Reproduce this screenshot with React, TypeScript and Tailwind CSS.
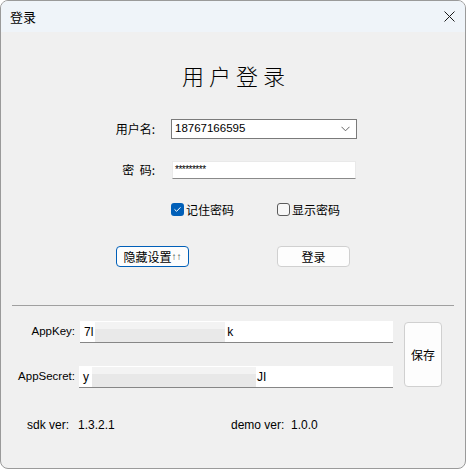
import React from 'react';

const cjk = { fontFamily: '"Noto Sans CJK SC", "Liberation Sans", sans-serif' };
const latin = { fontFamily: '"Liberation Sans", "Noto Sans CJK SC", sans-serif' };

function Checkbox({ checked, label }: { checked?: boolean; label: string }) {
  return (
    <div className="flex items-center">
      {checked ? (
        <span className="flex h-[13px] w-[13px] items-center justify-center rounded-[3px] bg-[#005fb8]">
          <svg width="9" height="9" viewBox="0 0 9 9" fill="none">
            <path d="M1.8 4.6 L3.6 6.3 L7.2 2.6" stroke="white" strokeWidth="1" strokeLinecap="round" strokeLinejoin="round" />
          </svg>
        </span>
      ) : (
        <span className="h-[13px] w-[13px] rounded-[3px] border border-[#5b5b5b] bg-[#f7f7f7]" />
      )}
      <span className="ml-[2px] text-[12px] leading-[13px] text-black" style={cjk}>
        {label}
      </span>
    </div>
  );
}

export default function App() {
  return (
    <div className="h-[469px] w-[466px] overflow-hidden rounded-[8px] border border-[#9a9a9a] bg-[#f0f0f0] text-black">
      {/* title bar */}
      <div className="flex h-[31px] items-center justify-between bg-[#eff4f9] pl-[9px] pr-[10px]">
        <span className="text-[13px]" style={cjk}>登录</span>
        <svg width="11" height="11" viewBox="0 0 11 11">
          <path d="M0.5 0.5 L10.5 10.5 M10.5 0.5 L0.5 10.5" stroke="#1a1a1a" strokeWidth="1" />
        </svg>
      </div>

      {/* heading */}
      <div className="mt-[30px] flex h-[26px] justify-center pl-[6px]">
        <span className="text-[22px] font-light leading-[26px] tracking-[5px]" style={cjk}>用户登录</span>
      </div>

      {/* username */}
      <div className="mt-[31px] flex items-center pl-[93px]">
        <span className="w-[61px] text-right text-[12px]" style={cjk}>用户名:</span>
        <div className="ml-[16px] flex h-[20px] w-[186px] items-center justify-between border border-[#7a7a7a] bg-white pl-[3px] pr-[6px]">
          <span className="text-[11.5px]" style={latin}>18767166595</span>
          <svg width="9" height="6" viewBox="0 0 9 6">
            <path d="M0.5 0.8 L4.5 4.8 L8.5 0.8" stroke="#555" strokeWidth="0.9" fill="none" />
          </svg>
        </div>
      </div>

      {/* password */}
      <div className="mt-[22px] flex items-center pl-[93px]">
        <span className="w-[61px] text-right text-[12px]" style={cjk}>密&nbsp;&nbsp;码:</span>
        <div className="ml-[17px] flex h-[18px] w-[184px] items-center border border-b-[#8a8a8a] border-l-[#e9e9e9] border-r-[#e9e9e9] border-t-[#e9e9e9] bg-white pl-[2px]">
          <span className="text-[10px] leading-[10px] tracking-[-0.5px]" style={latin}>*********</span>
        </div>
      </div>

      {/* checkboxes */}
      <div className="mt-[24px] flex h-[13px] pl-[170px]">
        <div className="w-[106px]">
          <Checkbox checked label="记住密码" />
        </div>
        <Checkbox label="显示密码" />
      </div>

      {/* buttons */}
      <div className="mt-[30px] flex pl-[115px]">
        <button className="flex h-[21px] w-[73px] items-center justify-center rounded-[4px] border border-[#005fb8] bg-[#fdfdfd] text-[12px]" style={cjk}>
          隐藏设置<span className="text-[10px] text-[#333]" style={latin}>↑↑</span>
        </button>
        <button className="ml-[88px] flex h-[21px] w-[73px] items-center justify-center rounded-[4px] border border-[#d0d0d0] bg-[#fdfdfd] text-[12px]" style={cjk}>
          登录
        </button>
      </div>

      {/* separator */}
      <div className="mx-[11px] mt-[38px] h-px bg-[#a0a0a0]" />

      {/* keys */}
      <div className="mt-[15px] flex">
        <div className="flex flex-col">
          <div className="flex h-[22px] items-center">
            <span className="w-[75px] pr-[1px] text-right text-[11.5px]" style={latin}>AppKey:</span>
            <div className="ml-[4px] flex h-[22px] w-[313px] items-center border-b border-[#868686] bg-white pl-[4px]">
              <span className="text-[12px]" style={latin}>7l</span>
              <div className="ml-[2px] flex h-[20px] w-[130px] flex-col">
                <div className="h-[7px] w-full bg-[#f3f3f3]" />
                <div className="h-[13px] w-full bg-[#e9e9e9]" />
              </div>
              <span className="ml-[2px] text-[12px]" style={latin}>k</span>
            </div>
          </div>
          <div className="mt-[23px] flex h-[22px] items-center">
            <span className="w-[75px] pr-[1px] text-right text-[11.5px]" style={latin}>AppSecret:</span>
            <div className="ml-[3px] flex h-[22px] w-[314px] items-center border-b border-[#868686] bg-white pl-[4px]">
              <span className="text-[12px]" style={latin}>y</span>
              <div className="ml-[3px] flex h-[20px] w-[164px] flex-col">
                <div className="h-[7px] w-full bg-[#f3f3f3]" />
                <div className="h-[13px] w-full bg-[#e8e8e8]" />
              </div>
              <span className="ml-[1px] text-[12px]" style={latin}>JI</span>
            </div>
          </div>
        </div>
        <button className="ml-[11px] mt-[1px] flex h-[65px] w-[38px] items-center justify-center rounded-[4px] border border-[#d0d0d0] bg-[#fdfdfd] text-[12px]" style={cjk}>
          保存
        </button>
      </div>

      {/* versions */}
      <div className="mt-[28px] flex text-[12px]" style={latin}>
        <span className="ml-[26px] w-[51px]">sdk ver:</span>
        <span className="w-[153px]">1.3.2.1</span>
        <span className="w-[60px]">demo ver:</span>
        <span>1.0.0</span>
      </div>
    </div>
  );
}
